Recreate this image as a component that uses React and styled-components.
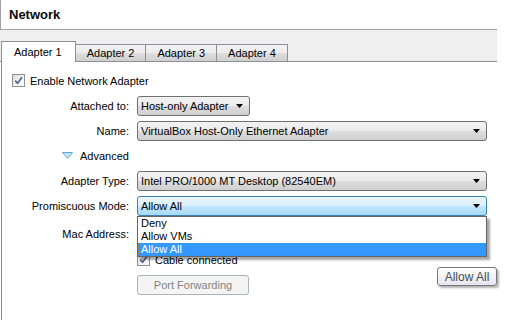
import React from 'react';
import styled, { createGlobalStyle } from 'styled-components';

const GlobalStyle = createGlobalStyle`
  body {
    margin: 0;
    background: #fff;
    font-family: "Liberation Sans", Arial, sans-serif;
    font-size: 11px;
    color: #000;
  }
`;

const Page = styled.div`
  width: 518px;
  height: 333px;
  overflow: hidden;
  position: relative;
`;

const Header = styled.div`
  height: 29px;
  border-left: 1px solid #a0a0a0;
  padding-left: 8px;
  display: flex;
  align-items: center;
`;

const Title = styled.div`
  font-weight: bold;
  font-size: 13px;
  color: #0a0a0a;
`;

const Panel = styled.div`
  width: 497px;
  border-top: 1px solid #a0a0a0;
`;

const TabBar = styled.div`
  height: 31px;
  background: #efefef;
  border-bottom: 1px solid #8d8f94;
  display: flex;
  align-items: flex-end;
  padding-left: 1px;
`;

const Tab = styled.div`
  box-sizing: border-box;
  display: flex;
  align-items: center;
  border: 1px solid #8d8f94;
  margin-left: -1px;
  &:first-child { margin-left: 0; }
  height: ${({ active }) => (active ? '21px' : '17px')};
  padding: ${({ active }) => (active ? '0 13px 1px 12px' : '0 11px')};
  margin-bottom: ${({ active }) => (active ? '-1px' : '0')};
  border-bottom: ${({ active }) => (active ? 'none' : '0')};
  background: ${({ active }) =>
    active ? '#fff' : 'linear-gradient(#f3f3f3 0%, #ebebeb 50%, #dedede 51%, #cfcfcf 100%)'};
  position: relative;
  z-index: ${({ active }) => (active ? 1 : 0)};
`;

const Content = styled.div`
  position: relative;
  margin-left: 1px;
  border-left: 1px solid #8a8a8a;
  height: 258px;
  padding-top: 12px;
  box-sizing: border-box;
`;

const CheckRow = styled.label`
  display: flex;
  align-items: center;
  gap: 5px;
  height: 13px;
  padding-left: ${({ indent }) => indent || 0}px;
`;

const Box = styled.span`
  box-sizing: border-box;
  width: 13px;
  height: 13px;
  border: 1px solid #8f8f8f;
  background: linear-gradient(135deg, #dcdcdc 0%, #f4f4f4 60%, #fff 100%);
  display: flex;
  align-items: center;
  justify-content: center;
  flex-shrink: 0;
`;

const Form = styled.div`
  display: grid;
  grid-template-columns: 127px 350px;
  grid-template-rows: repeat(5, 25px) 31px 21px 29px;
  column-gap: 8px;
  align-items: center;
  margin-top: 6px;
`;

const Label = styled.div`
  justify-self: end;
  white-space: nowrap;
`;

const Disclosure = styled.div`
  grid-column: 1 / -1;
  display: flex;
  align-items: center;
  gap: 7px;
  padding-left: 60px;
`;

const ComboWrap = styled.div`
  position: relative;
  width: ${({ width }) => (width ? `${width}px` : '100%')};
`;

const Combo = styled.div`
  box-sizing: border-box;
  height: 20px;
  border: 1px solid ${({ focus }) => (focus ? '#3c7fb1' : '#707070')};
  border-radius: 3px;
  background: ${({ focus }) =>
    focus
      ? 'linear-gradient(#eaf6fd 0%, #d9f0fc 50%, #bee6fd 51%, #a7d9f5 100%)'
      : 'linear-gradient(#f2f2f2 0%, #ebebeb 50%, #dddddd 51%, #cfcfcf 100%)'};
  display: flex;
  align-items: center;
  justify-content: space-between;
  padding: 0 6px 0 3px;
  white-space: nowrap;
`;

const Arrow = () => (
  <svg width="7" height="4" viewBox="0 0 7 4">
    <polygon points="0,0 7,0 3.5,4" fill="#000" />
  </svg>
);

const ListBox = styled.div`
  position: absolute;
  top: 100%;
  left: 0;
  right: 0;
  background: #fff;
  border: 1px solid #646464;
  box-shadow: 3px 3px 2px rgba(0, 0, 0, 0.35);
  z-index: 5;
`;

const Option = styled.div`
  height: 13px;
  line-height: 13px;
  padding-left: 3px;
  background: ${({ selected }) => (selected ? '#3399ff' : 'transparent')};
  color: ${({ selected }) => (selected ? '#fff' : '#000')};
  outline: ${({ selected }) => (selected ? '1px dotted #c8701e' : 'none')};
  outline-offset: -1px;
`;

const Button = styled.div`
  box-sizing: border-box;
  width: 112px;
  height: 20px;
  border: 1px solid #adb2b5;
  border-radius: 3px;
  background: #f4f4f4;
  color: #838383;
  display: flex;
  align-items: center;
  justify-content: center;
`;

const Tooltip = styled.div`
  position: absolute;
  left: 435px;
  top: 205px;
  box-sizing: border-box;
  width: 60px;
  height: 19px;
  border: 1px solid #767676;
  border-radius: 3px;
  background: linear-gradient(#ffffff, #e4e5f0);
  box-shadow: 2px 2px 2px rgba(0, 0, 0, 0.3);
  color: #4c4c4c;
  font-size: 12px;
  display: flex;
  align-items: center;
  justify-content: center;
`;

const Check = () => (
  <Box>
    <svg width="9" height="9" viewBox="0 0 9 9">
      <path d="M1.2 4.6 L3.6 7.2 L8 1.2" fill="none" stroke="#4a5f8f" strokeWidth="1.6" />
    </svg>
  </Box>
);

const tabs = ['Adapter 1', 'Adapter 2', 'Adapter 3', 'Adapter 4'];

export default function App() {
  return (
    <Page>
      <GlobalStyle />
      <Header>
        <Title>Network</Title>
      </Header>
      <Panel>
        <TabBar>
          {tabs.map((t, i) => (
            <Tab key={t} active={i === 0}>{t}</Tab>
          ))}
        </TabBar>
        <Content>
          <CheckRow indent={10}>
            <Check />
            Enable Network Adapter
          </CheckRow>
          <Form>
            <Label>Attached to:</Label>
            <ComboWrap width={113}>
              <Combo>Host-only Adapter<Arrow /></Combo>
            </ComboWrap>

            <Label>Name:</Label>
            <ComboWrap>
              <Combo>VirtualBox Host-Only Ethernet Adapter<Arrow /></Combo>
            </ComboWrap>

            <Disclosure>
              <svg width="11" height="7" viewBox="0 0 11 7">
                <polygon points="0.5,0.5 10.5,0.5 5.5,6.3" fill="#c4e5f8" stroke="#5fa6d8" strokeWidth="1" />
              </svg>
              Advanced
            </Disclosure>

            <Label>Adapter Type:</Label>
            <ComboWrap>
              <Combo>Intel PRO/1000 MT Desktop (82540EM)<Arrow /></Combo>
            </ComboWrap>

            <Label>Promiscuous Mode:</Label>
            <ComboWrap>
              <Combo focus>Allow All<Arrow /></Combo>
              <ListBox>
                <Option>Deny</Option>
                <Option>Allow VMs</Option>
                <Option selected>Allow All</Option>
              </ListBox>
            </ComboWrap>

            <Label>Mac Address:</Label>
            <div />

            <div />
            <CheckRow>
              <Check />
              Cable connected
            </CheckRow>

            <div />
            <Button>Port Forwarding</Button>
          </Form>
          <Tooltip>Allow All</Tooltip>
        </Content>
      </Panel>
    </Page>
  );
}
